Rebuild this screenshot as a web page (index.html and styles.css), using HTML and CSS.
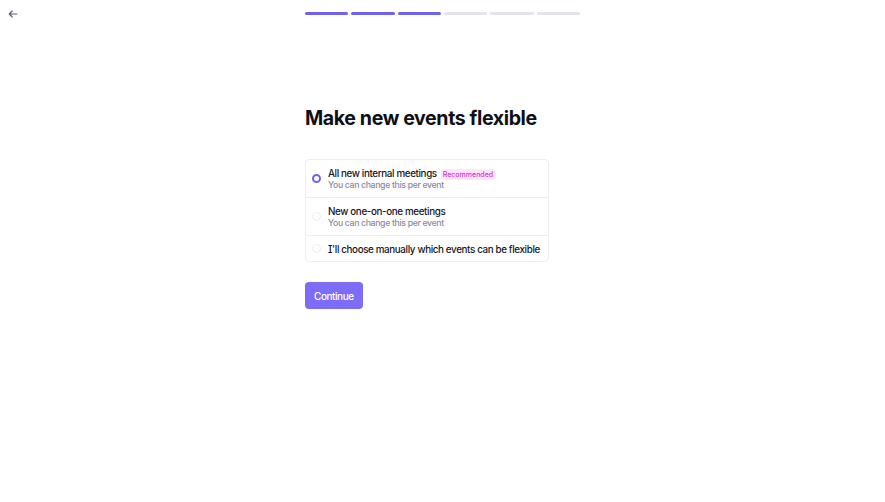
FILE: index.html
```html
<!DOCTYPE html>
<html>
<head>
<meta charset="utf-8">
<link rel="stylesheet" href="styles.css">
</head>
<body>
<div class="top">
  <button class="back" aria-label="Back">
    <svg width="10" height="8" viewBox="0 0 10 8"><path d="M9 4H1.2M4.2 1L1.2 4l3 3" fill="none" stroke="#5b5b75" stroke-width="1.1" stroke-linecap="round" stroke-linejoin="round"/></svg>
  </button>
  <div class="progress">
    <span class="seg done"></span><span class="seg done"></span><span class="seg done"></span><span class="seg"></span><span class="seg"></span><span class="seg"></span>
  </div>
</div>
<main class="content">
  <h1 class="title">Make new events flexible</h1>
  <div class="card">
    <label class="opt">
      <span class="radio checked"></span>
      <span class="texts">
        <span class="main">All new internal meetings <span class="badge">Recommended</span></span>
        <span class="sub">You can change this per event</span>
      </span>
    </label>
    <label class="opt">
      <span class="radio"></span>
      <span class="texts">
        <span class="main">New one-on-one meetings</span>
        <span class="sub">You can change this per event</span>
      </span>
    </label>
    <label class="opt single">
      <span class="radio"></span>
      <span class="texts">
        <span class="main">I'll choose manually which events can be flexible</span>
      </span>
    </label>
  </div>
  <button class="continue">Continue</button>
</main>
</body>
</html>
```
FILE: styles.css
```css
* { box-sizing: border-box; }
html, body { margin: 0; padding: 0; background: #fff; }
body { font-family: Inter, "Noto Sans", sans-serif; color: #15151f; width: 885px; height: 502px; overflow: hidden; font-feature-settings: "cv08"; }

.top { position: relative; height: 26px; display: flex; justify-content: center; padding-top: 12px; }
.back { position: absolute; left: 7px; top: 9px; width: 12px; height: 10px; padding: 0; border: 0; background: none; display: flex; align-items: center; justify-content: center; }
.progress { display: flex; gap: 3px; width: 275px; }
.seg { flex: 1; height: 3px; border-radius: 2px; background: #e4e3ee; }
.seg.done { background: #6e63ee; }

.content { width: 275px; margin: 0 auto; padding-top: 77px; }
.title { margin: 0; font-size: 19.6px; font-weight: 700; line-height: 30px; letter-spacing: -0.4px; color: #0f0f17; }

.card { margin-top: 26px; width: 244px; border: 1px solid #eeedf3; border-radius: 4px; }
.opt { display: flex; align-items: center; gap: 7px; padding: 0 6px 0 5px; height: 38px; border-top: 1px solid #eeedf3; }
.opt:first-child { border-top: 0; height: 37px; }
.opt.single { height: 26px; }
.radio { width: 9px; height: 9px; border-radius: 50%; border: 1px solid #ebeaf1; flex: none; margin-left: 1px; }
.radio.checked { border: 2.5px solid #6e63ee; background: #fff; }
.texts { display: flex; flex-direction: column; padding-top: 2px; }
.main { font-size: 9.8px; font-weight: 500; line-height: 12px; letter-spacing: -0.36px; color: #15151f; white-space: nowrap; display: flex; align-items: center; }
.sub { font-size: 8.7px; font-weight: 500; line-height: 11px; letter-spacing: -0.33px; color: #8c89a6; }
.badge { margin-left: 4px; font-size: 7px; font-weight: 500; letter-spacing: 0; color: #d633d0; background: #fde5fb; border-radius: 2px; padding: 1px 2px; line-height: 9px; }

.continue { margin-top: 20px; height: 27px; padding: 0 9px; border: 0; border-radius: 4px; background: #7d6cf7; color: #fff; font-family: Inter, sans-serif; font-size: 10px; font-weight: 500; letter-spacing: -0.45px; }
```
